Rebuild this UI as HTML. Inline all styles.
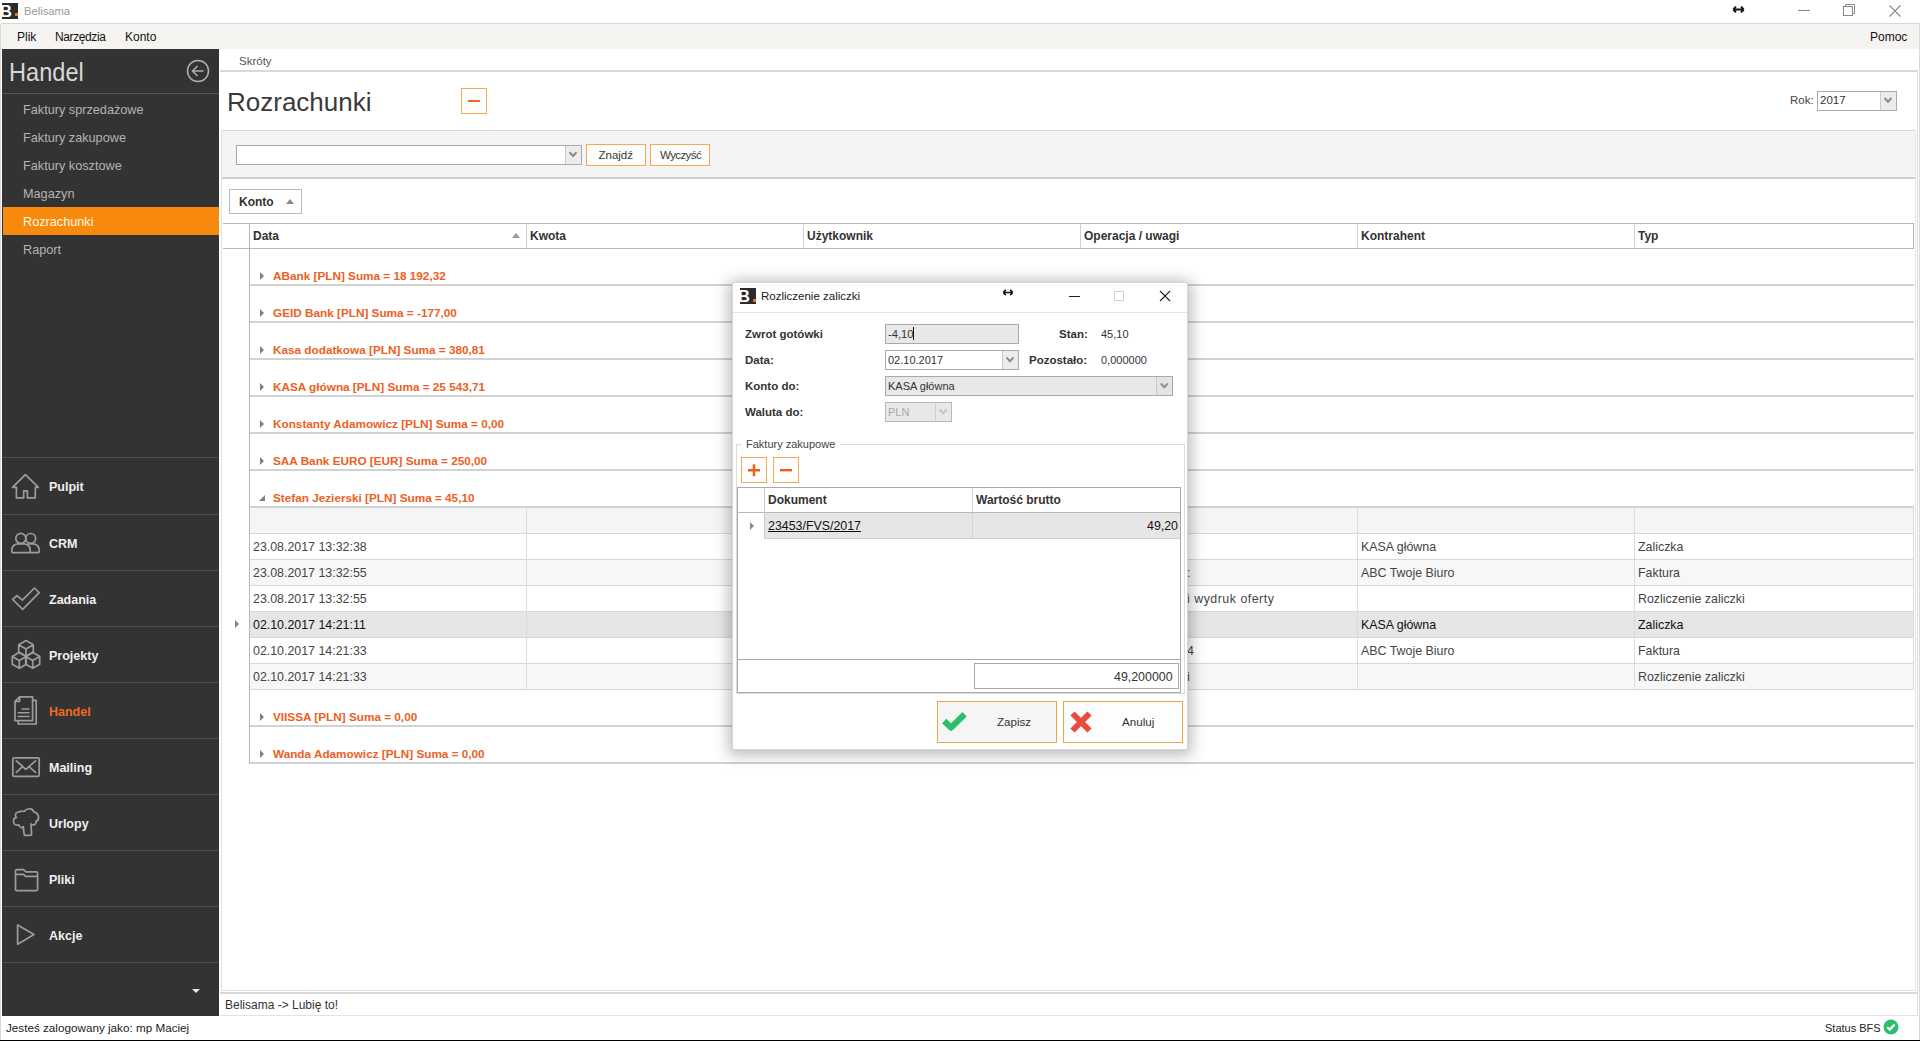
<!DOCTYPE html>
<html><head><meta charset="utf-8">
<style>
*{box-sizing:border-box;margin:0;padding:0}
html,body{width:1920px;height:1041px;overflow:hidden;background:#fff;font-family:"Liberation Sans",sans-serif;}
.a{position:absolute}
.t{position:absolute;white-space:nowrap;line-height:1}
.hl{position:absolute;height:1px}
.vl{position:absolute;width:1px}
/* sidebar */
#sb{position:absolute;left:2px;top:49px;width:217px;height:967px;background:#333333}
.sub{position:absolute;left:21px;font-size:12.7px;color:#b4b4b4;line-height:1}
.mod{position:absolute;left:0;width:217px;height:56px;border-top:1px solid #4d4d4d}
.mod .lbl{position:absolute;left:47px;top:0;font-size:12.5px;font-weight:bold;color:#f0f0f0;line-height:1}
.mod svg{position:absolute;left:0;top:0}
/* grid */
.grp{position:absolute;left:250px;width:1664px;height:2px;background:#d2d2d2}
.gtxt{position:absolute;left:273px;font-size:11.75px;font-weight:bold;color:#ec6024;line-height:1;white-space:nowrap}
.exp{position:absolute;left:260px;width:0;height:0;border-top:4px solid transparent;border-bottom:4px solid transparent;border-left:4.5px solid #808080}
.row{position:absolute;left:250px;width:1664px;height:26px;border-bottom:1px solid #d8d8d8}
.cell{position:absolute;top:0;height:25px;font-size:12.4px;color:#444;line-height:1;white-space:nowrap}
.btn{position:absolute;border:1px solid #f1aa55;background:#fdfdfd}
.lab{position:absolute;font-size:11.5px;font-weight:bold;color:#333;line-height:1;white-space:nowrap}
</style></head><body>

<!-- ============ TITLE BAR ============ -->
<div class="a" style="left:2px;top:3px;width:16px;height:16px;background:#2b2b2b;overflow:hidden"><div class="t" style="left:-2px;top:0px;font-size:16.5px;font-weight:bold;color:#fff">B</div><div class="a" style="left:13px;top:10px;width:3px;height:3px;background:#e8742a"></div></div>
<div class="t" style="left:24px;top:6px;font-size:11.2px;color:#9a9a9a">Belisama</div>
<div class="hl" style="left:1px;top:23px;width:1919px;background:#d6d6d6"></div>

<!-- menu bar -->
<div class="a" style="left:1px;top:24px;width:1918px;height:25px;background:#f5f4f1"></div>
<div class="vl" style="left:0;top:24px;height:1016px;background:#dadada"></div>
<div class="vl" style="left:1919px;top:24px;height:1016px;background:#dadada"></div>
<div class="t" style="left:17px;top:31px;font-size:12px;color:#111">Plik</div>
<div class="t" style="left:55px;top:31px;font-size:12px;color:#111;letter-spacing:-0.4px">Narzędzia</div>
<div class="t" style="left:125px;top:31px;font-size:12px;color:#111">Konto</div>
<div class="t" style="left:1870px;top:31px;font-size:12px;color:#111">Pomoc</div>

<!-- window controls -->
<svg class="a" style="left:1732px;top:5px" width="13" height="9"><path d="M1.2 4.5H11.8M1.2 4.5L4 1.7M1.2 4.5L4 7.3M11.8 4.5L9 1.7M11.8 4.5L9 7.3" stroke="#111" stroke-width="1.9" fill="none"/></svg>
<div class="hl" style="left:1798px;top:10px;width:12px;background:#888"></div>
<svg class="a" style="left:1842px;top:3px" width="14" height="14"><rect x="1.5" y="3.5" width="9" height="9" fill="#fff" stroke="#888"/><path d="M3.5 3.5V1.5H12.5V10.5H10.5" stroke="#888" fill="none"/></svg>
<svg class="a" style="left:1888px;top:4px" width="14" height="14"><path d="M1.5 1.5L12.5 12.5M12.5 1.5L1.5 12.5" stroke="#888" stroke-width="1.1"/></svg>

<!-- ============ SIDEBAR ============ -->
<div id="sb">
  <div class="t" style="left:7px;top:10px;font-size:26.5px;color:#d8d8d8;transform:scaleX(0.89);transform-origin:0 0">Handel</div>
  <svg class="a" style="left:184px;top:10px" width="24" height="24"><circle cx="12" cy="12" r="10.5" stroke="#b0b0b0" stroke-width="1.5" fill="none"/><path d="M6.5 12H17.5M11.5 7L6.5 12L11.5 17" stroke="#b0b0b0" stroke-width="1.5" fill="none"/></svg>
  <div class="a" style="left:0;top:44px;width:217px;height:1px;background:#555"></div>
  <div class="sub" style="top:55px">Faktury sprzedażowe</div>
  <div class="sub" style="top:83px">Faktury zakupowe</div>
  <div class="sub" style="top:111px">Faktury kosztowe</div>
  <div class="sub" style="top:139px">Magazyn</div>
  <div class="a" style="left:1px;top:158px;width:216px;height:28px;background:#f7890c"></div>
  <div class="sub" style="top:167px;color:#fff8e8">Rozrachunki</div>
  <div class="sub" style="top:195px">Raport</div>

  <div class="mod" style="top:408px"><span class="lbl" style="top:22.5px">Pulpit</span></div>
  <div class="mod" style="top:465px"><span class="lbl" style="top:22.5px">CRM</span></div>
  <div class="mod" style="top:521px"><span class="lbl" style="top:22.5px">Zadania</span></div>
  <div class="mod" style="top:577px"><span class="lbl" style="top:22.5px">Projekty</span></div>
  <div class="mod" style="top:633px"><span class="lbl" style="top:22.5px;color:#f06a1e">Handel</span></div>
  <div class="mod" style="top:689px"><span class="lbl" style="top:22.5px">Mailing</span></div>
  <div class="mod" style="top:745px"><span class="lbl" style="top:22.5px">Urlopy</span></div>
  <div class="mod" style="top:801px"><span class="lbl" style="top:22.5px">Pliki</span></div>
  <div class="mod" style="top:857px"><span class="lbl" style="top:22.5px">Akcje</span></div>
  <div class="mod" style="top:913px"></div>
  <div class="a" style="left:190px;top:940px;width:0;height:0;border-left:4px solid transparent;border-right:4px solid transparent;border-top:4.5px solid #e8e8e8"></div>
</div>

<!-- sidebar icons -->
<svg class="a" style="left:0;top:0" width="220" height="1041" viewBox="0 0 220 1041">
<g fill="none" stroke="#9c9c9c" stroke-width="1.7" stroke-linejoin="round" stroke-linecap="round">
<path d="M25.4,474.6 L12.6,487.3 L16.4,487.3 L16.4,497.8 L23.7,497.8 L23.7,490.8 L27.4,490.8 L27.4,497.8 L35.3,497.8 L35.3,487.3 L38.4,487.3 Z"/>
<circle cx="20.8" cy="538.4" r="5"/>
<circle cx="30.7" cy="538.4" r="4.9"/>
<path d="M13.5,552.7 H28.6 Q30.2,552.7 30.2,551 V549.8 C30.2,546.2 27.2,543.9 23.8,543.9 H18.2 C14.8,543.9 11.8,546.2 11.8,549.8 V551 Q11.8,552.7 13.5,552.7 Z"/>
<path d="M30.2,552.7 H37.6 Q39.2,552.7 39.2,551 V549.8 C39.2,546.2 36.2,543.9 32.8,543.9 H28.2"/>
<path d="M12.6,599.5 L17,595.6 L22.4,600.2 L34.4,588 L39.2,592.6 L22.7,609.3 Z"/>
<path d="M26,640.6 L33.3,644.8 L33.3,652.3 L26,656.5 L18.7,652.3 L18.7,644.8 Z M18.7,644.8 L26,649 L33.3,644.8 M26,649 L26,656.5"/>
<path d="M19.3,652.3 L26.3,656.5 L26.3,664.2 L19.3,668.2 L12.3,664.2 L12.3,656.5 Z M12.3,656.5 L19.3,660.6 L26.3,656.5 M19.3,660.6 L19.3,668.2"/>
<path d="M32.7,652.3 L39.7,656.5 L39.7,664.2 L32.7,668.2 L25.7,664.2 L25.7,656.5 Z M25.7,656.5 L32.7,660.6 L39.7,656.5 M32.7,660.6 L32.7,668.2"/>
<path d="M19.6,696.8 H32.6 V720.6 H15 V701.3 Z M15,701.3 H19.6 V696.8"/>
<path d="M33,700.4 H36.2 V724 H18.2 V720.8"/>
<path d="M22,709 H29 M18.2,712.8 H29 M18.2,716.5 H29" stroke-width="1.5"/>
<rect x="12.8" y="757.8" width="26.4" height="18.6" rx="1.5"/>
<path d="M16.3,760.8 L25.8,769.4 L35.6,760.8 M16.3,772.3 L22,767.2 M35.6,772.3 L29.6,767.2"/>
<path d="M24.3,835 C23.8,832 23.5,830 23.3,826.5 C22.5,828 19.5,828.2 19,825 C16,825.6 13,824 13.6,821.4 C13.2,819.5 14.5,818 16.4,817.4 C14.8,816 15.2,812.8 17.5,812.2 C19.5,811.4 22.5,811.2 24.5,811.2 C25.8,809.4 28,808.6 30,808.8 C32,809 33.4,810.2 33.6,811.6 C36,812.4 38.4,814.6 38.6,817.2 C38.8,819.6 37.4,820.8 36,821.4 C36.2,823.4 35.2,825 32.8,825 C32,825 31.4,824.6 31,824 C31.2,828 31.4,831 31.6,834 C31.6,835 30.8,835.4 29.5,835.4 L25.5,835.4 C24.8,835.4 24.3,835.2 24.3,835 Z"/>
<path d="M15.5,889.6 V871 Q15.5,869.6 17,869.6 H23.6 L25.6,871.8 H36.2 Q37.6,871.8 37.6,873.2 V889.2 Q37.6,890.6 36.2,890.6 H16.5 Q15.5,890.6 15.5,889.6 Z M15.5,874.3 H23.6 L25.6,876.4 H37.6"/>
<path d="M17.6,925 L34,934.5 L17.6,944.2 Z"/>
</g>
</svg>


<!-- ============ MAIN ============ -->
<div class="vl" style="left:221px;top:130px;height:861px;background:#e2e2e2"></div>
<div class="t" style="left:239px;top:56px;font-size:11.5px;color:#555">Skróty</div>
<div class="a" style="left:220px;top:70px;width:1698px;height:2px;background:#d8d8d8"></div>
<div class="t" style="left:227px;top:89px;font-size:26px;color:#3a3a3a">Rozrachunki</div>
<div class="btn" style="left:461px;top:88px;width:26px;height:26px"></div>
<div class="a" style="left:468px;top:100px;width:12px;height:2px;background:#f26522"></div>

<div class="t" style="left:1790px;top:95px;font-size:11.5px;color:#444">Rok:</div>
<div class="a" style="left:1817px;top:91px;width:80px;height:20px;border:1px solid #aaa;background:#fff"></div>
<div class="t" style="left:1820px;top:95px;font-size:11.5px;color:#333">2017</div>
<div class="a" style="left:1880px;top:92px;width:16px;height:18px;border-left:1px solid #ccc;background:#ececec"></div>

<!-- filter panel -->
<div class="a" style="left:222px;top:130px;width:1694px;height:49px;background:#f4f4f4;border-top:1px solid #d8d8d8;border-bottom:2px solid #d0d0d0;border-right:1px solid #e0e0e0"></div>
<div class="a" style="left:236px;top:145px;width:346px;height:20px;border:1px solid #a8a8a8;background:#fff"></div>
<div class="a" style="left:565px;top:146px;width:16px;height:18px;border-left:1px solid #c8c8c8;background:#ececec"></div>
<div class="btn" style="left:586px;top:144px;width:60px;height:22px"></div>
<div class="t" style="left:598.5px;top:150px;font-size:11.5px;color:#3a3a3a">Znajdź</div>
<div class="btn" style="left:650px;top:144px;width:60px;height:22px"></div>
<div class="t" style="left:660px;top:150px;font-size:11.5px;color:#3a3a3a;letter-spacing:-0.6px">Wyczyść</div>

<!-- group-by panel -->
<div class="a" style="left:229px;top:189px;width:73px;height:25px;border:1px solid #bdbdbd;background:#fff"></div>
<div class="t" style="left:239px;top:196px;font-size:12px;font-weight:bold;color:#333">Konto</div>
<div class="a" style="left:286px;top:199px;width:0;height:0;border-left:4.5px solid transparent;border-right:4.5px solid transparent;border-bottom:5px solid #8a8a8a"></div>

<!-- grid header -->
<div class="a" style="left:223px;top:223px;width:1691px;height:26px;border:1px solid #b8b8b8;border-left:none;background:#fff"></div>
<div class="vl" style="left:249px;top:224px;height:540px;background:#b8b8b8"></div>
<div class="vl" style="left:526px;top:224px;height:24px;background:#d0d0d0"></div>
<div class="vl" style="left:803px;top:224px;height:24px;background:#d0d0d0"></div>
<div class="vl" style="left:1080px;top:224px;height:24px;background:#d0d0d0"></div>
<div class="vl" style="left:1357px;top:224px;height:24px;background:#d0d0d0"></div>
<div class="vl" style="left:1634px;top:224px;height:24px;background:#d0d0d0"></div>
<div class="t" style="left:253px;top:230px;font-size:12px;font-weight:bold;color:#333">Data</div>
<div class="a" style="left:512px;top:233px;width:0;height:0;border-left:4.5px solid transparent;border-right:4.5px solid transparent;border-bottom:5px solid #999"></div>
<div class="t" style="left:530px;top:230px;font-size:12px;font-weight:bold;color:#333">Kwota</div>
<div class="t" style="left:807px;top:230px;font-size:12px;font-weight:bold;color:#333">Użytkownik</div>
<div class="t" style="left:1084px;top:230px;font-size:12px;font-weight:bold;color:#333">Operacja / uwagi</div>
<div class="t" style="left:1361px;top:230px;font-size:12px;font-weight:bold;color:#333">Kontrahent</div>
<div class="t" style="left:1638px;top:230px;font-size:12px;font-weight:bold;color:#333">Typ</div>

<!-- GROUPS -->
<div id="groups">
<div class="gtxt" style="top:270px">ABank [PLN] Suma = 18 192,32</div>
<div class="exp" style="top:272px"></div>
<div class="grp" style="top:284px"></div>
<div class="gtxt" style="top:307px">GEID Bank [PLN] Suma = -177,00</div>
<div class="exp" style="top:309px"></div>
<div class="grp" style="top:321px"></div>
<div class="gtxt" style="top:344px">Kasa dodatkowa [PLN] Suma = 380,81</div>
<div class="exp" style="top:346px"></div>
<div class="grp" style="top:358px"></div>
<div class="gtxt" style="top:381px">KASA główna [PLN] Suma = 25 543,71</div>
<div class="exp" style="top:383px"></div>
<div class="grp" style="top:395px"></div>
<div class="gtxt" style="top:418px">Konstanty Adamowicz [PLN] Suma = 0,00</div>
<div class="exp" style="top:420px"></div>
<div class="grp" style="top:432px"></div>
<div class="gtxt" style="top:455px">SAA Bank EURO [EUR] Suma = 250,00</div>
<div class="exp" style="top:457px"></div>
<div class="grp" style="top:469px"></div>
<div class="gtxt" style="top:492px">Stefan Jezierski [PLN] Suma = 45,10</div>
<div class="a" style="left:259px;top:495px;width:0;height:0;border-left:6px solid transparent;border-bottom:6px solid #808080"></div>
<div class="grp" style="top:506px"></div>
<div class="gtxt" style="top:711px">VIISSA [PLN] Suma = 0,00</div>
<div class="exp" style="top:713px"></div>
<div class="grp" style="top:725px"></div>
<div class="gtxt" style="top:748px">Wanda Adamowicz [PLN] Suma = 0,00</div>
<div class="exp" style="top:750px"></div>
<div class="grp" style="top:762px"></div>
<div class="row" style="top:508px;background:#f5f5f5"></div>
<div class="row" style="top:534px;background:#ffffff"></div>
<div class="cell" style="left:253px;top:541px;color:#444">23.08.2017 13:32:38</div>
<div class="cell" style="left:1361px;top:541px;color:#444">KASA główna</div>
<div class="cell" style="left:1638px;top:541px;color:#444">Zaliczka</div>
<div class="row" style="top:560px;background:#f7f7f7"></div>
<div class="cell" style="left:253px;top:567px;color:#444">23.08.2017 13:32:55</div>
<div class="cell" style="left:1187px;top:567px;color:#444">:</div>
<div class="cell" style="left:1361px;top:567px;color:#444">ABC Twoje Biuro</div>
<div class="cell" style="left:1638px;top:567px;color:#444">Faktura</div>
<div class="row" style="top:586px;background:#ffffff"></div>
<div class="cell" style="left:253px;top:593px;color:#444">23.08.2017 13:32:55</div>
<div class="cell" style="left:1187px;top:593px;color:#444;letter-spacing:0.5px">i wydruk oferty</div>
<div class="cell" style="left:1638px;top:593px;color:#444">Rozliczenie zaliczki</div>
<div class="row" style="top:612px;background:#e6e6e6"></div>
<div class="cell" style="left:253px;top:619px;color:#111">02.10.2017 14:21:11</div>
<div class="cell" style="left:1361px;top:619px;color:#111">KASA główna</div>
<div class="cell" style="left:1638px;top:619px;color:#111">Zaliczka</div>
<div class="row" style="top:638px;background:#ffffff"></div>
<div class="cell" style="left:253px;top:645px;color:#444">02.10.2017 14:21:33</div>
<div class="cell" style="left:1187px;top:645px;color:#444">4</div>
<div class="cell" style="left:1361px;top:645px;color:#444">ABC Twoje Biuro</div>
<div class="cell" style="left:1638px;top:645px;color:#444">Faktura</div>
<div class="row" style="top:664px;background:#f7f7f7"></div>
<div class="cell" style="left:253px;top:671px;color:#444">02.10.2017 14:21:33</div>
<div class="cell" style="left:1187px;top:671px;color:#444">i</div>
<div class="cell" style="left:1638px;top:671px;color:#444">Rozliczenie zaliczki</div>
<div class="vl" style="left:526px;top:508px;height:182px;background:#dcdcdc"></div>
<div class="vl" style="left:803px;top:508px;height:182px;background:#dcdcdc"></div>
<div class="vl" style="left:1080px;top:508px;height:182px;background:#dcdcdc"></div>
<div class="vl" style="left:1357px;top:508px;height:182px;background:#dcdcdc"></div>
<div class="vl" style="left:1634px;top:508px;height:182px;background:#dcdcdc"></div>
<div class="vl" style="left:1913px;top:508px;height:182px;background:#dcdcdc"></div>
<div class="a" style="left:235px;top:620px;width:0;height:0;border-top:4px solid transparent;border-bottom:4px solid transparent;border-left:4.5px solid #808080"></div>
</div>

<!-- ============ DIALOG ============ -->
<div class="a" style="left:732px;top:282px;width:456px;height:468px;background:#fff;border:1px solid #c8c8c8;box-shadow:0 2px 14px 3px rgba(0,0,0,0.28);border-color:#d4d4d4"></div>
<div class="a" style="left:740px;top:288px;width:16px;height:16px;background:#2b2b2b;overflow:hidden"><div class="t" style="left:-2px;top:0px;font-size:16.5px;font-weight:bold;color:#fff">B</div><div class="a" style="left:13px;top:10.5px;width:3px;height:3px;background:#e8742a"></div></div>
<div class="t" style="left:761px;top:291px;font-size:11.5px;color:#1a1a1a">Rozliczenie zaliczki</div>
<svg class="a" style="left:1002px;top:288px" width="12" height="9"><path d="M1.2 4.5H10.8M1.2 4.5L3.8 1.9M1.2 4.5L3.8 7.1M10.8 4.5L8.2 1.9M10.8 4.5L8.2 7.1" stroke="#111" stroke-width="1.7" fill="none"/></svg>
<div class="hl" style="left:1069px;top:296px;width:11px;background:#222"></div>
<div class="a" style="left:1114px;top:291px;width:10px;height:10px;border:1px solid #d0d0d0"></div>
<svg class="a" style="left:1159px;top:290px" width="12" height="12"><path d="M1 1L11 11M11 1L1 11" stroke="#222" stroke-width="1.1"/></svg>
<div class="hl" style="left:733px;top:312px;width:454px;background:#e2e2e2"></div>

<div class="lab" style="left:745px;top:329px">Zwrot gotówki</div>
<div class="lab" style="left:745px;top:355px">Data:</div>
<div class="lab" style="left:745px;top:381px">Konto do:</div>
<div class="lab" style="left:745px;top:407px">Waluta do:</div>

<div class="a" style="left:885px;top:324px;width:134px;height:20px;background:#e8e8e8;border:1px solid #a9a9a9"></div>
<div class="t" style="left:888px;top:329px;font-size:11.2px;color:#333">-4,10</div>
<div class="a" style="left:913px;top:327px;width:1px;height:13px;background:#111"></div>

<div class="a" style="left:885px;top:350px;width:134px;height:20px;background:#fff;border:1px solid #a9a9a9"></div>
<div class="a" style="left:1002px;top:351px;width:16px;height:18px;background:#ececec;border-left:1px solid #c8c8c8"></div>
<div class="t" style="left:888px;top:354.5px;font-size:11px;color:#333">02.10.2017</div>

<div class="a" style="left:885px;top:376px;width:288px;height:20px;background:#e8e8e8;border:1px solid #a9a9a9"></div>
<div class="a" style="left:1156px;top:377px;width:16px;height:18px;background:#e4e4e4;border-left:1px solid #c8c8c8"></div>
<div class="t" style="left:888px;top:380.5px;font-size:11px;color:#333">KASA główna</div>

<div class="a" style="left:885px;top:402px;width:67px;height:20px;background:#e8e8e8;border:1px solid #b8b8b8"></div>
<div class="a" style="left:935px;top:403px;width:16px;height:18px;background:#e8e8e8;border-left:1px solid #cfcfcf"></div>
<div class="t" style="left:888px;top:406.5px;font-size:11px;color:#a8a8a8">PLN</div>

<div class="lab" style="left:1059px;top:329px">Stan:</div>
<div class="t" style="left:1101px;top:328.5px;font-size:11px;color:#333">45,10</div>
<div class="lab" style="left:1029px;top:355px">Pozostało:</div>
<div class="t" style="left:1101px;top:354.5px;font-size:11px;color:#333">0,000000</div>

<!-- groupbox -->
<div class="a" style="left:736px;top:444px;width:449px;height:250px;border:1px solid #dcdcdc"></div>
<div class="a" style="left:742px;top:438px;width:98px;height:12px;background:#fff"></div>
<div class="t" style="left:746px;top:439px;font-size:11px;color:#444">Faktury zakupowe</div>
<div class="btn" style="left:741px;top:457px;width:26px;height:26px"></div>
<svg class="a" style="left:741px;top:457px" width="26" height="26"><path d="M7 13.2H19M13 7.2V19.2" stroke="#ea5f1c" stroke-width="2.4"/></svg>
<div class="btn" style="left:773px;top:457px;width:26px;height:26px"></div>
<svg class="a" style="left:773px;top:457px" width="26" height="26"><path d="M7 13.2H19" stroke="#ea5f1c" stroke-width="2.4"/></svg>

<!-- inner grid -->
<div class="a" style="left:737px;top:487px;width:444px;height:206px;border:1px solid #a9a9a9;background:#fff"></div>
<div class="hl" style="left:738px;top:512px;width:442px;background:#b8b8b8"></div>
<div class="vl" style="left:764px;top:488px;height:51px;background:#c8c8c8"></div>
<div class="vl" style="left:972px;top:488px;height:24px;background:#d0d0d0"></div>
<div class="t" style="left:768px;top:494px;font-size:12px;font-weight:bold;color:#333">Dokument</div>
<div class="t" style="left:976px;top:494px;font-size:12px;font-weight:bold;color:#333">Wartość brutto</div>
<div class="a" style="left:765px;top:513px;width:415px;height:26px;background:#e6e6e6;border-bottom:1px solid #d0d0d0"></div>
<div class="vl" style="left:972px;top:513px;height:25px;background:#d4d4d4"></div>
<div class="a" style="left:750px;top:521.5px;width:0;height:0;border-top:4px solid transparent;border-bottom:4px solid transparent;border-left:4.5px solid #8a8a8a"></div>
<div class="t" style="left:768px;top:520px;font-size:12.4px;color:#111;text-decoration:underline">23453/FVS/2017</div>
<div class="t" style="left:1147px;top:520px;font-size:12.4px;color:#111">49,20</div>
<div class="hl" style="left:738px;top:659px;width:442px;background:#a9a9a9"></div>
<div class="a" style="left:974px;top:663px;width:205px;height:26px;border:1px solid #a9a9a9;background:#fff"></div>
<div class="t" style="left:1114px;top:671px;font-size:12.4px;color:#333">49,200000</div>

<!-- dialog buttons -->
<div class="a" style="left:937px;top:701px;width:120px;height:42px;background:#f5f5f5;border:1px solid #f0a648"></div>
<svg class="a" style="left:940px;top:708px" width="30" height="26"><path d="M4.2 13L11 19.6L24.6 6.2" stroke="#2dbe6c" stroke-width="6.2" fill="none" stroke-linejoin="round"/></svg>
<div class="t" style="left:997px;top:716px;font-size:11.6px;color:#333">Zapisz</div>
<div class="a" style="left:1063px;top:701px;width:120px;height:42px;background:#fdfdfd;border:1px solid #f0a648"></div>
<svg class="a" style="left:1069px;top:710px" width="24" height="24"><path d="M3.5 3.5L20.5 20.5M20.5 3.5L3.5 20.5" stroke="#e84c3d" stroke-width="6" fill="none"/></svg>
<div class="t" style="left:1122px;top:716px;font-size:11.6px;color:#333">Anuluj</div>

<!-- ============ STATUS ============ -->
<div class="hl" style="left:222px;top:990px;width:1694px;background:#e4e4e4"></div>
<div class="a" style="left:220px;top:992px;width:1697px;height:2px;background:#d8d8d8"></div>
<div class="t" style="left:225px;top:999px;font-size:12px;color:#333">Belisama -&gt; Lubię to!</div>
<div class="hl" style="left:220px;top:1015px;width:1697px;background:#e2e2e2"></div>
<div class="vl" style="left:1917px;top:70px;height:946px;background:#dcdcdc"></div>
<div class="vl" style="left:1915px;top:130px;height:861px;background:#e6e6e6"></div>
<div class="t" style="left:6px;top:1022px;font-size:11.7px;color:#222">Jesteś zalogowany jako: mp Maciej</div>
<div class="t" style="left:1825px;top:1023px;font-size:11px;color:#222">Status BFS</div>
<svg class="a" style="left:1883px;top:1019px" width="16" height="16"><circle cx="8" cy="8" r="7.5" fill="#2dbe6c"/><path d="M4.2 8.2L6.8 10.6L11.6 5.6" stroke="#fff" stroke-width="2.2" fill="none"/></svg>
<div class="a" style="left:0;top:1040px;width:1920px;height:1px;background:#000"></div>

<!-- combo chevrons -->
<svg class="a" style="left:0;top:0;pointer-events:none" width="1920" height="1041">
<g fill="none" stroke="#8a8a8a" stroke-width="2">
<path d="M569.5,152.2 L573,156 L576.5,152.2"/>
<path d="M1884.5,98 L1888,101.8 L1891.5,98"/>
</g>
<g fill="none" stroke="#8e8e8e" stroke-width="2">
<path d="M1006.5,357.5 L1010,361.3 L1013.5,357.5"/>
<path d="M1160.8,383.5 L1164.3,387.3 L1167.8,383.5"/>
</g>
<g fill="none" stroke="#c4c4c4" stroke-width="2">
<path d="M939.6,409.5 L943.1,413.3 L946.6,409.5"/>
</g>
</svg>
</body></html>
